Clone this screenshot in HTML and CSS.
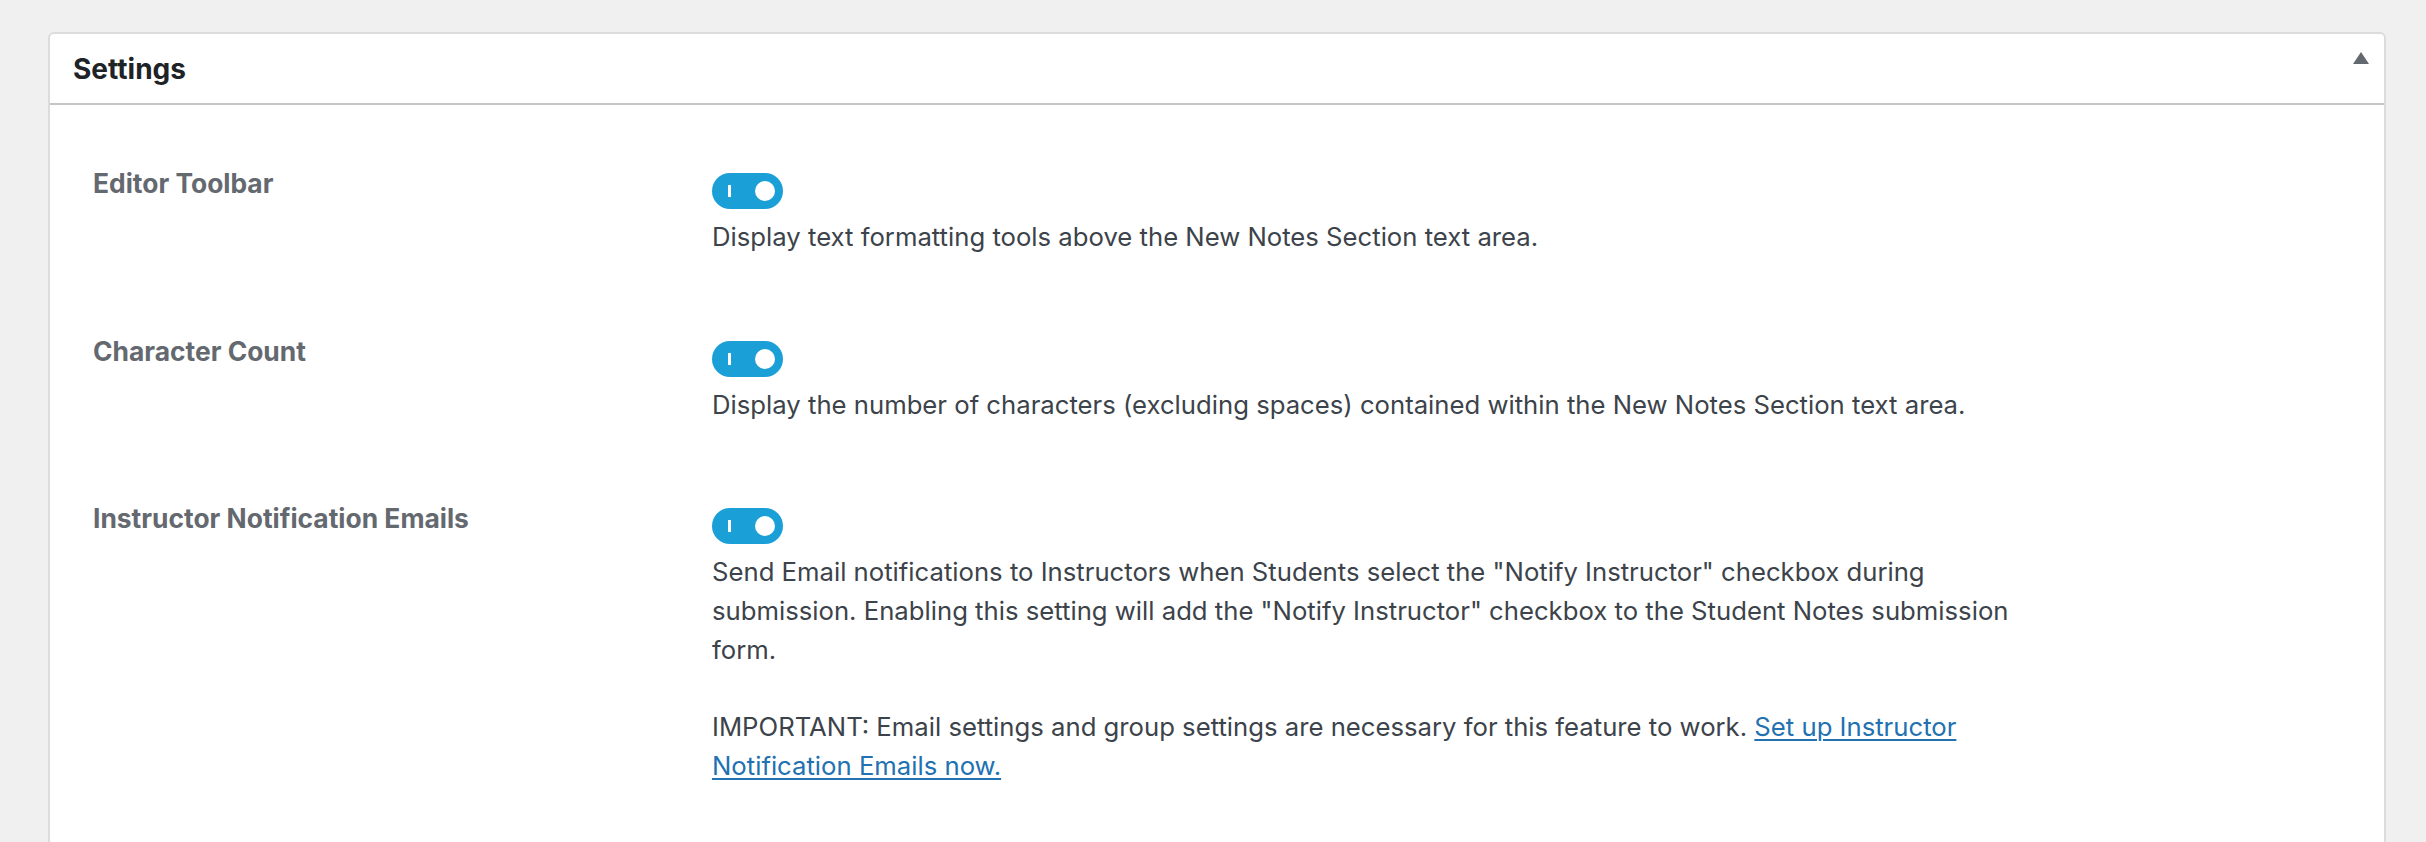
FILE: index.html
```html
<!DOCTYPE html>
<html lang="en">
<head>
<meta charset="utf-8">
<title>Settings</title>
<link rel="stylesheet" href="styles.css">
</head>
<body>
<div class="page">
  <div class="card">
    <div class="card-header">
      <h2 class="card-title">Settings</h2>
      <span class="collapse-arrow" aria-hidden="true"></span>
    </div>
    <div class="card-body">
      <div class="setting-row">
        <div class="setting-label">Editor Toolbar</div>
        <div class="setting-control">
          <span class="toggle"><span class="toggle-bar"></span><span class="toggle-knob"></span></span>
          <p class="desc">Display text formatting tools above the New Notes Section text area.</p>
        </div>
      </div>
      <div class="setting-row">
        <div class="setting-label">Character Count</div>
        <div class="setting-control">
          <span class="toggle"><span class="toggle-bar"></span><span class="toggle-knob"></span></span>
          <p class="desc">Display the number of characters (excluding spaces) contained within the New Notes Section text area.</p>
        </div>
      </div>
      <div class="setting-row">
        <div class="setting-label">Instructor Notification Emails</div>
        <div class="setting-control">
          <span class="toggle"><span class="toggle-bar"></span><span class="toggle-knob"></span></span>
          <p class="desc">Send Email notifications to Instructors when Students select the "Notify Instructor" checkbox during submission. Enabling this setting will add the "Notify Instructor" checkbox to the Student Notes submission form.</p>
          <p class="desc desc-gap">IMPORTANT: Email settings and group settings are necessary for this feature to work. <a href="#" class="link">Set up Instructor Notification Emails now.</a></p>
        </div>
      </div>
    </div>
  </div>
</div>
</body>
</html>
```

FILE: styles.css
```css
html, body {
  margin: 0;
  padding: 0;
  background: #f0f0f1;
  font-family: Inter, "Noto Sans", "Liberation Sans", sans-serif;
}

.page {
  padding: 32px 40px 0 48px;
}

.card {
  background: #ffffff;
  border: 2px solid #dcdcde;
  border-radius: 6px;
  min-height: 900px;
}

.card-header {
  position: relative;
  height: 69px;
  display: flex;
  align-items: center;
  padding-left: 23px;
  border-bottom: 2px solid #c3c4c7;
}

.card-title {
  margin: 0;
  font-size: 28px;
  font-weight: 700;
  color: #1d2327;
}

.collapse-arrow {
  position: absolute;
  right: 15px;
  top: 18px;
  width: 0;
  height: 0;
  border-left: 8px solid transparent;
  border-right: 8px solid transparent;
  border-bottom: 12px solid #646970;
}

.card-body {
  padding: 61px 0 60px 43px;
  display: flex;
  flex-direction: column;
  gap: 77px;
}

.setting-row {
  display: grid;
  grid-template-columns: 619px 1330px;
}

.setting-label {
  padding-top: 1px;
  font-size: 26.4px;
  line-height: 32px;
  font-weight: 700;
  color: #646970;
}

.setting-control {
  padding-top: 7px;
}

.toggle {
  position: relative;
  display: block;
  width: 71px;
  height: 36px;
  border-radius: 18px;
  background: #1a9fd6;
}

.toggle-bar {
  position: absolute;
  left: 16px;
  top: 12px;
  width: 3px;
  height: 12px;
  background: #ffffff;
}

.toggle-knob {
  position: absolute;
  right: 8px;
  top: 8px;
  width: 20px;
  height: 20px;
  border-radius: 50%;
  background: #ffffff;
}

.desc {
  margin: 9px 0 0;
  font-size: 25.7px;
  line-height: 38.7px;
  color: #3c434a;
}

.desc-gap {
  margin-top: 38.7px;
}

.link {
  color: #2271b1;
  text-decoration: underline;
  text-decoration-thickness: 2px;
  text-underline-offset: 3px;
}
```
